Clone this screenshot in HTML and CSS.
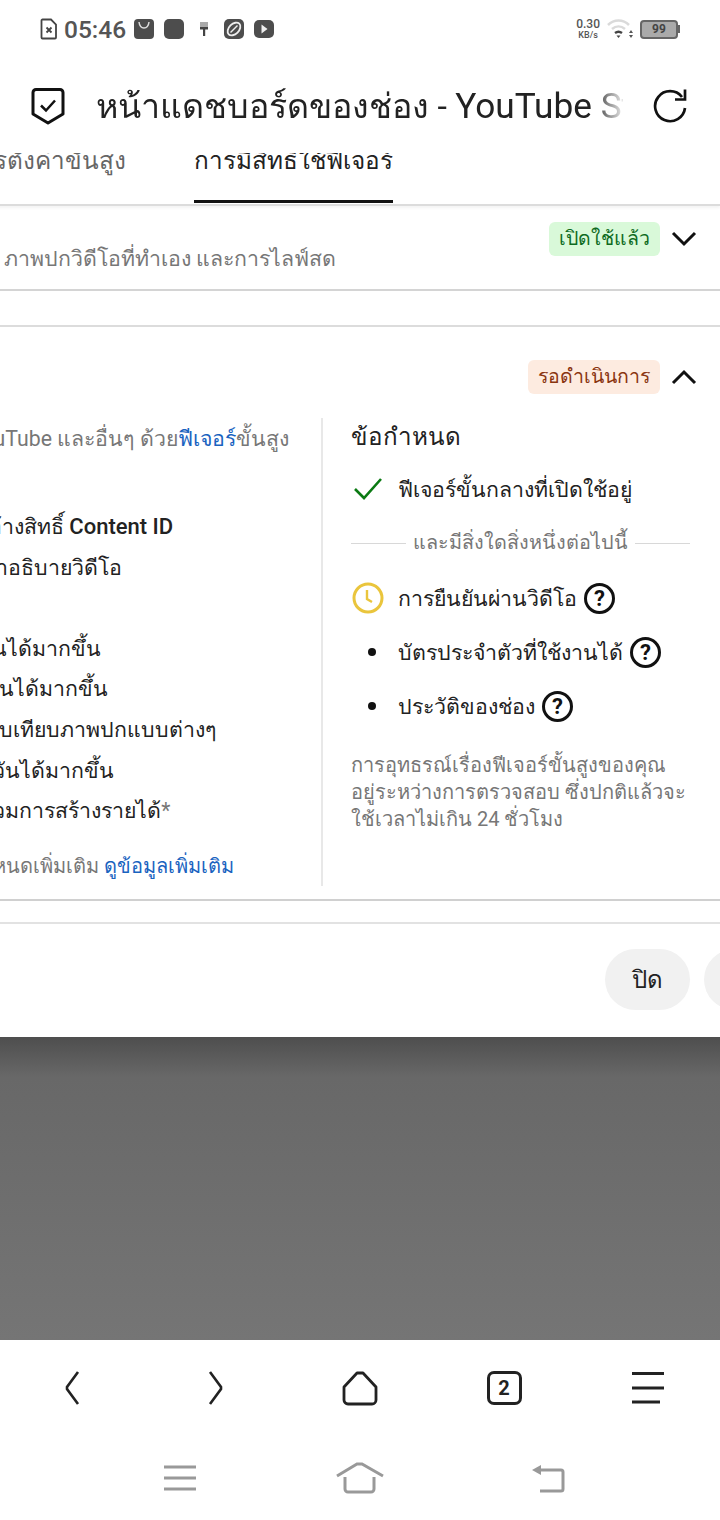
FILE: index.html
```html
<!DOCTYPE html>
<html lang="th">
<head>
    <meta charset="UTF-8">
    <meta name="viewport" content="width=device-width, initial-scale=1.0">
    <title>หน้าแดชบอร์ดของช่อง - YouTube Studio</title>
    <link rel="stylesheet" href="styles.css">
</head>
<body>
    <div class="status-bar">
        <div class="status-left">
            <svg class="sim-icon" width="18" height="22" viewBox="0 0 18 22">
                <path d="M2.500 1.500h8.500l5 5v13a1 1 0 0 1-1 1h-12.500a1 1 0 0 1-1-1v-17a1 1 0 0 1 1-1z" fill="none" stroke="#444" stroke-width="1.800"/>
                <path d="M6.500 9.500l5 5M11.500 9.500l-5 5" stroke="#444" stroke-width="1.800"/>
            </svg>
            <span class="clock">05:46</span>
            <svg width="20" height="20" viewBox="0 0 20 20">
                <rect width="20" height="20" rx="4" fill="#4d4d4d"/>
                <path d="M5 3c.5 4 2.500 6 5 6s4.500-2 5-6" fill="none" stroke="#ddd" stroke-width="1.500"/>
            </svg>
            <svg width="20" height="20" viewBox="0 0 20 20"><rect width="20" height="20" rx="5" fill="#4d4d4d"/></svg>
            <svg class="brush-icon" width="14" height="20" viewBox="0 0 14 20">
                <rect x="3" y="3" width="8" height="6" fill="#aaa"/>
                <rect x="3" y="8" width="8" height="2.500" fill="#444"/>
                <rect x="6" y="10" width="2.200" height="7" fill="#444"/>
            </svg>
            <svg width="20" height="20" viewBox="0 0 20 20">
                <rect width="20" height="20" rx="5" fill="#4d4d4d"/>
                <ellipse cx="10" cy="10" rx="7.500" ry="5" transform="rotate(-45 10 10)" fill="none" stroke="#eee" stroke-width="1.800"/>
                <path d="M6.500 13.500l7-7" stroke="#eee" stroke-width="1.500"/>
            </svg>
            <svg width="20" height="20" viewBox="0 0 20 20">
                <rect y="1" width="20" height="18" rx="5" fill="#4d4d4d"/>
                <path d="M7.500 5.500l6 4.500-6 4.500z" fill="#eee"/>
            </svg>
        </div>
        <div class="status-right">
            <div class="speed"><span>0.30</span><small>KB/s</small></div>
            <svg width="26" height="20" viewBox="0 0 26 20">
                <path d="M1 6c6-6 15-6 21 0" fill="none" stroke="#dadada" stroke-width="2.500"/>
                <path d="M5 10c4-3.500 9-3.500 13 0" fill="none" stroke="#dadada" stroke-width="2.500"/>
                <path d="M8 14c2-1.500 5-1.500 7 0" fill="none" stroke="#444" stroke-width="2.400"/>
                <path d="M9.500 16.500h4l-2 2.500z" fill="#444"/>
                <path d="M24 11l-2 3h4zM24 19l-2-3h4z" fill="#555"/>
            </svg>
            <div class="battery-wrap">
                <div class="battery"><span>99</span></div>
                <i class="battery-nub"></i>
            </div>
        </div>
    </div>

    <div class="title-bar">
        <svg width="36" height="38" viewBox="0 0 36 38">
            <path d="M6 2.500h24a3 3 0 0 1 3 3v21.500l-15 9-15-9v-21.500a3 3 0 0 1 3-3z" fill="none" stroke="#111" stroke-width="3" stroke-linejoin="round"/>
            <path d="M11 18.500l5 5 9-10" fill="none" stroke="#111" stroke-width="2.500"/>
        </svg>
        <div class="page-title">หน้าแดชบอร์ดของช่อง - <span class="latin">YouTube Studio</span></div>
        <svg width="36" height="36" viewBox="0 0 36 36">
            <path d="M30 9a15 15 0 1 0 3 11" fill="none" stroke="#111" stroke-width="2.700"/>
            <path d="M23 11.500h10v-10" fill="none" stroke="#111" stroke-width="2.700"/>
        </svg>
    </div>

    <div class="tabs">
        <div class="tab">การตั้งค่าขั้นสูง</div>
        <div class="tab active">การมีสิทธิ์ใช้ฟีเจอร์</div>
    </div>

    <div class="feature-row">
        <div class="feature-desc">อัปโหลดวิดีโอยาว ภาพปกวิดีโอที่ทำเอง และการไลฟ์สด</div>
        <div class="feature-actions">
            <span class="badge badge-green">เปิดใช้แล้ว</span>
            <svg class="chevron" width="26" height="16" viewBox="0 0 26 16"><path d="M2 2l11 11 11-11" fill="none" stroke="#111" stroke-width="3"/></svg>
        </div>
    </div>

    <div class="feature-open">
        <div class="open-head">
            <span class="badge badge-orange">รอดำเนินการ</span>
            <svg class="chevron" width="26" height="16" viewBox="0 0 26 16"><path d="M2 14l11-11 11 11" fill="none" stroke="#111" stroke-width="3"/></svg>
        </div>
        <div class="open-body">
            <div class="col-left">
                <p class="intro">รับประโยชน์เพิ่มเติมจาก YouTube และอื่นๆ ด้วย<a href="#">ฟีเจอร์</a>ขั้นสูง</p>
                <ul class="perks">
                    <li class="perk-claims">อุทธรณ์การอ้างสิทธิ์ <b>Content ID</b></li>
                    <li class="perk-links">ลิงก์นอกในคำอธิบายวิดีโอ</li>
                    <li>แท็ก</li>
                    <li class="perk-uploads">อัปโหลดต่อวันได้มากขึ้น</li>
                    <li class="perk-publish">เผยแพร่ต่อวันได้มากขึ้น</li>
                    <li>ทดสอบเปรียบเทียบภาพปกแบบต่างๆ</li>
                    <li>สตรีมสดต่อวันได้มากขึ้น</li>
                    <li class="perk-money">สมัคร เข้าร่วมการสร้างรายได้<span class="star">*</span></li>
                </ul>
                <p class="terms">*อาจมีข้อกำหนดเพิ่มเติม <a href="#">ดูข้อมูลเพิ่มเติม</a></p>
            </div>
            <div class="col-right">
                <h3>ข้อกำหนด</h3>
                <div class="req req-first">
                    <svg class="req-icon" width="32" height="24" viewBox="0 0 32 24"><path d="M3 12l9 9 17-19" fill="none" stroke="#0b7a13" stroke-width="2.600"/></svg>
                    <span>ฟีเจอร์ขั้นกลางที่เปิดใช้อยู่</span>
                </div>
                <div class="or-line"><span>และมีสิ่งใดสิ่งหนึ่งต่อไปนี้</span></div>
                <div class="req">
                    <svg class="req-icon" width="32" height="32" viewBox="0 0 32 32">
                        <circle cx="16" cy="16" r="14" fill="none" stroke="#eac53c" stroke-width="3"/>
                        <path d="M15 8v9l5 3" fill="none" stroke="#eac53c" stroke-width="2.400"/>
                    </svg>
                    <span>การยืนยันผ่านวิดีโอ</span>
                    <span class="help">?</span>
                </div>
                <div class="req">
                    <span class="req-icon"><i class="dot"></i></span>
                    <span>บัตรประจำตัวที่ใช้งานได้</span>
                    <span class="help">?</span>
                </div>
                <div class="req">
                    <span class="req-icon"><i class="dot"></i></span>
                    <span>ประวัติของช่อง</span>
                    <span class="help">?</span>
                </div>
                <p class="note">การอุทธรณ์เรื่องฟีเจอร์ขั้นสูงของคุณอยู่ระหว่างการตรวจสอบ ซึ่งปกติแล้วจะใช้เวลาไม่เกิน 24 ชั่วโมง</p>
            </div>
        </div>
    </div>

    <div class="dialog-footer">
        <button>ปิด</button>
        <button class="next">ถัดไป</button>
    </div>

    <div class="scrim"></div>

    <div class="browser-bar">
        <svg width="20" height="36" viewBox="0 0 20 36"><path d="M16 2l-11 15v2l11 15" fill="none" stroke="#222" stroke-width="2.600"/></svg>
        <svg width="20" height="36" viewBox="0 0 20 36"><path d="M4 2l11 15v2l-11 15" fill="none" stroke="#222" stroke-width="2.600"/></svg>
        <svg width="36" height="36" viewBox="0 0 36 36"><path d="M15 3h6l13 14v13a4 4 0 0 1-4 4h-24a4 4 0 0 1-4-4v-13z" fill="none" stroke="#222" stroke-width="2.800" stroke-linejoin="round"/></svg>
        <div class="tab-count">2</div>
        <svg width="34" height="36" viewBox="0 0 34 36">
            <path d="M1 3.500h32M1 18h32M1 32h28" stroke="#222" stroke-width="3"/>
        </svg>
    </div>

    <div class="system-nav">
        <svg width="34" height="26" viewBox="0 0 34 26"><path d="M1 2h32M1 13h32M1 24h32" stroke="#999" stroke-width="3"/></svg>
        <svg width="50" height="32" viewBox="0 0 50 32">
            <path d="M2 14l20-12h5l21 12" fill="none" stroke="#999" stroke-width="3"/>
            <path d="M10 15v12a3 3 0 0 0 3 3h23a3 3 0 0 0 3-3v-12" fill="none" stroke="#999" stroke-width="3"/>
        </svg>
        <svg class="back-icon" width="36" height="30" viewBox="0 0 36 30">
            <path d="M3 7l9-5v10z" fill="#999"/>
            <path d="M9 7h23a2 2 0 0 1 2 2v17a2 2 0 0 1-2 2h-21" fill="none" stroke="#999" stroke-width="3"/>
        </svg>
    </div>
</body>
</html>
```

FILE: styles.css
```css
* {
    box-sizing: border-box;
}
body {
    margin: 0;
    width: 720px;
    height: 1520px;
    overflow: hidden;
    background: white;
    font-family: Roboto, "Noto Sans", sans-serif;
    color: #222;
}
.status-bar {
    height: 60px;
    padding: 0 40px 2px;
    display: flex;
    justify-content: space-between;
    align-items: center;
}
.status-left {
    display: flex;
    align-items: center;
    gap: 10px;
}
.clock {
    margin: 0 -2px 0 -4px;
    font-size: 24.500px;
    font-weight: 500;
    color: #555;
}
.brush-icon {
    margin: 0 3px;
}
.status-right {
    display: flex;
    align-items: center;
    gap: 7px;
}
.speed {
    margin-top: 2px;
    display: flex;
    flex-direction: column;
    align-items: center;
    font-size: 12px;
    font-weight: 500;
    line-height: 11px;
    color: #555;
}
.speed small {
    font-size: 9px;
}
.battery-wrap {
    display: flex;
    align-items: center;
}
.battery {
    width: 38px;
    height: 19px;
    border: 2px solid #666;
    border-radius: 4px;
    background: #aaa;
    font-size: 12px;
    font-weight: 700;
    line-height: 15px;
    text-align: center;
    color: #444;
}
.battery-nub {
    width: 2px;
    height: 8px;
    background: #666;
}
.title-bar {
    height: 93px;
    padding: 0 32px 1px 30px;
    display: flex;
    align-items: center;
}
.page-title {
    width: 527px;
    margin: 0 29px 0 30px;
    overflow: hidden;
    white-space: nowrap;
    font-size: 34px;
    color: #222;
    -webkit-mask-image: linear-gradient(to right, black 94%, rgba(0,0,0,0.1));
    mask-image: linear-gradient(to right, black 94%, rgba(0,0,0,0.1));
}
.latin {
    font-size: 35.200px;
}
.tabs {
    height: 53px;
    border-bottom: 2px solid #dcdcdc;
    box-shadow: 0 2px 3px rgba(0,0,0,0.05);
    display: flex;
    gap: 68px;
    margin-left: -35px;
    overflow: hidden;
}
.tab {
    height: 61px;
    margin-top: -11px;
    font-size: 24.300px;
    line-height: 38px;
    white-space: nowrap;
    color: #666;
}
.tab.active {
    color: #222;
    border-bottom: 3px solid #111;
}
.feature-row {
    height: 85px;
    border-bottom: 2px solid #d4d4d4;
    display: flex;
    justify-content: space-between;
}
.feature-desc {
    align-self: flex-end;
    width: 336px;
    padding-bottom: 14px;
    direction: rtl;
    overflow: hidden;
    white-space: nowrap;
    font-size: 21.300px;
    color: #777;
}
.feature-actions {
    padding: 16px 23px 0 0;
    display: flex;
    align-items: flex-start;
    gap: 11px;
}
.badge {
    height: 34px;
    padding: 0 10px;
    border-radius: 6px;
    font-size: 19.500px;
    line-height: 33px;
    white-space: nowrap;
}
.badge-green {
    background: #d9f9d9;
    color: #0f6b1f;
}
.badge-orange {
    background: #fdebe0;
    color: #8a3510;
}
.chevron {
    margin-top: 9px;
}
.feature-open {
    margin-top: 34px;
    height: 576px;
    border-top: 2px solid #dcdcdc;
    border-bottom: 2px solid #d0d0d0;
}
.open-head {
    height: 91px;
    padding: 33px 23px 0 0;
    display: flex;
    justify-content: flex-end;
    align-items: flex-start;
    gap: 11px;
}
.open-body {
    display: flex;
}
.col-left {
    width: 323px;
    height: 468px;
    border-right: 2px solid #e8e8e8;
    overflow: hidden;
    white-space: nowrap;
    font-size: 21.300px;
}
.intro {
    margin: 5px 0 0 -256px;
    line-height: 32px;
    color: #777;
}
.col-left a {
    color: #1a63bf;
    text-decoration: none;
}
.perks {
    list-style: none;
    margin: 52px 0 0 -113px;
    padding: 0;
}
.perks li {
    height: 40.600px;
    line-height: 40px;
}
.perks b {
    font-size: 22px;
    font-weight: 500;
}
.perks .perk-claims {
    margin-left: -5px;
}
.perks .perk-links {
    margin-left: -7px;
}
.perks .perk-uploads {
    margin-left: -13px;
}
.perks .perk-publish {
    margin-left: 3px;
}
.perks .perk-money {
    margin-left: 4px;
}
.star {
    color: #777;
}
.terms {
    margin: 18px 0 0 -113px;
    font-size: 20px;
    line-height: 32px;
    color: #777;
}
.col-right {
    width: 367px;
    padding-left: 28px;
    font-size: 21.300px;
}
.col-right h3 {
    margin: 0;
    font-size: 24.200px;
    font-weight: 400;
    line-height: 38px;
    color: #222;
}
.req {
    height: 54px;
    display: flex;
    align-items: center;
    white-space: nowrap;
}
.req-first {
    margin-top: 13px;
    height: 40px;
}
.req-icon {
    width: 47px;
    flex-shrink: 0;
    display: flex;
    justify-content: center;
    padding-right: 13px;
}
.dot {
    width: 8px;
    height: 8px;
    border-radius: 50%;
    background: #111;
    margin-left: 7px;
}
.help {
    width: 31px;
    height: 31px;
    margin-left: 7px;
    border: 3px solid #111;
    border-radius: 50%;
    font-size: 22px;
    font-weight: 700;
    line-height: 25px;
    text-align: center;
    color: #111;
}
.or-line {
    margin: 19px 0 13px;
    display: flex;
    align-items: center;
    gap: 7px;
    font-size: 19.800px;
    line-height: 30px;
    color: #777;
    white-space: nowrap;
}
.or-line::before, .or-line::after {
    content: "";
    flex: 1;
    height: 1px;
    background: #d8d8d8;
}
.note {
    width: 338px;
    margin: 19px 0 0;
    font-size: 20px;
    line-height: 27px;
    color: #777;
}
.dialog-footer {
    margin-top: 21px;
    height: 115px;
    border-top: 2px solid #e2e2e2;
    padding: 25px 0 0 605px;
    display: flex;
    gap: 14px;
    width: 840px;
}
.dialog-footer button {
    width: 85px;
    height: 61px;
    flex-shrink: 0;
    border: none;
    border-radius: 31px;
    background: #f1f1f1;
    font-family: inherit;
    font-size: 24px;
    color: #222;
}
.dialog-footer .next {
    width: 120px;
}
.scrim {
    height: 303px;
    background: linear-gradient(to bottom, #4e4e4e, #686868 40px, #6c6c6c 120px, #757575);
}
.browser-bar {
    height: 96px;
    display: grid;
    grid-template-columns: repeat(5, 1fr);
    justify-items: center;
    align-items: center;
}
.tab-count {
    width: 35px;
    height: 34px;
    border: 3px solid #222;
    border-radius: 7px;
    font-size: 20px;
    font-weight: 700;
    line-height: 28px;
    text-align: center;
    color: #222;
}
.system-nav {
    height: 84px;
    padding: 0 90px 0;
    display: grid;
    grid-template-columns: repeat(3, 1fr);
    justify-items: center;
    align-items: center;
}
.back-icon {
    margin-left: 14px;
}
```
